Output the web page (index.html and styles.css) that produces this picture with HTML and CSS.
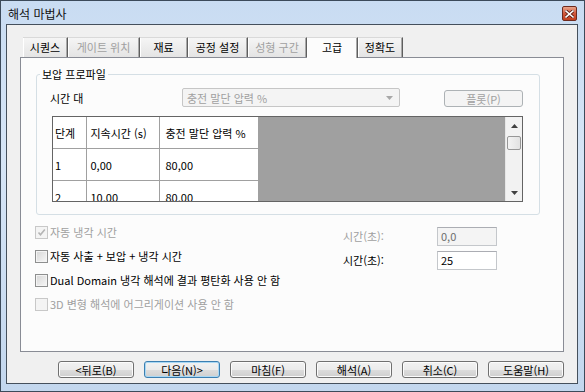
FILE: index.html
```html
<!DOCTYPE html>
<html lang="ko">
<head>
    <meta charset="UTF-8">
    <title>해석 마법사</title>
    <link rel="stylesheet" href="styles.css">
</head>
<body>
    <div class="window">
        <div class="titlebar">
            <span class="title">해석 마법사</span>
            <span class="close-btn">
                <svg width="9" height="8" viewBox="0 0 9 8">
                    <path d="M1 1 L8 7 M8 1 L1 7" stroke="#5a1a10" stroke-width="3.2" stroke-linecap="square"/>
                    <path d="M1 1 L8 7 M8 1 L1 7" stroke="#ffffff" stroke-width="1.6" stroke-linecap="square"/>
                </svg>
            </span>
        </div>

        <div class="client">
            <div class="tabs">
                <div class="tab w45">시퀀스</div>
                <div class="tab w72 off">게이트 위치</div>
                <div class="tab w48">재료</div>
                <div class="tab w60">공정 설정</div>
                <div class="tab w59 off">성형 구간</div>
                <div class="tab w51 active">고급</div>
                <div class="tab w45">정확도</div>
            </div>

            <div class="tab-panel">
                <fieldset class="group">
                    <legend>보압 프로파일</legend>
                    <div class="profile-row">
                        <span class="row-label">시간 대</span>
                        <div class="combo">
                            <span>충전 말단 압력 %</span>
                            <svg width="7" height="4" viewBox="0 0 7 4"><path d="M0 0 H7 L3.5 4 Z" fill="#a8a8a8"/></svg>
                        </div>
                        <span class="btn small off">플롯(P)</span>
                    </div>

                    <div class="grid">
                        <table class="data">
                            <colgroup>
                                <col class="c1"><col class="c2"><col class="c3">
                            </colgroup>
                            <tr class="head">
                                <td>단계</td><td>지속시간 (s)</td><td>충전 말단 압력 %</td>
                            </tr>
                            <tr>
                                <td>1</td><td>0,00</td><td>80,00</td>
                            </tr>
                            <tr>
                                <td>2</td><td>10,00</td><td>80,00</td>
                            </tr>
                        </table>
                        <div class="grid-empty"></div>
                        <div class="vscroll">
                            <svg width="7" height="4" viewBox="0 0 7 4"><path d="M3.5 0 L7 4 H0 Z" fill="#404040"/></svg>
                            <span class="thumb"></span>
                            <span class="track"></span>
                            <svg width="7" height="4" viewBox="0 0 7 4"><path d="M0 0 H7 L3.5 4 Z" fill="#404040"/></svg>
                        </div>
                    </div>
                </fieldset>

                <div class="options">
                    <div class="checks">
                        <label class="check off">
                            <span class="box">
                                <svg width="9" height="9" viewBox="0 0 9 9"><path d="M1.5 4.5 L3.5 6.8 L7.8 1.5" fill="none" stroke="#b4b4b4" stroke-width="1.6"/></svg>
                            </span>
                            자동 냉각 시간
                        </label>
                        <label class="check"><span class="box"></span>자동 사출 + 보압 + 냉각 시간</label>
                        <label class="check"><span class="box"></span>Dual Domain 냉각 해석에 결과 평탄화 사용 안 함</label>
                        <label class="check off"><span class="box"></span>3D 변형 해석에 어그리게이션 사용 안 함</label>
                    </div>
                    <div class="times">
                        <div class="time-row off">
                            <span class="time-label">시간(초):</span>
                            <span class="field">0,0</span>
                        </div>
                        <div class="time-row">
                            <span class="time-label">시간(초):</span>
                            <span class="field">25</span>
                        </div>
                    </div>
                </div>
            </div>

            <div class="buttons">
                <span class="btn">&lt;뒤로(B)</span>
                <span class="btn focus">다음(N)&gt;</span>
                <span class="btn">마침(F)</span>
                <span class="btn">해석(A)</span>
                <span class="btn">취소(C)</span>
                <span class="btn">도움말(H)</span>
            </div>
        </div>
    </div>
</body>
</html>
```

FILE: styles.css
```css
body {
    margin: 0;
    font-family: "Noto Sans CJK KR", sans-serif;
    font-size: 11px;
    color: #000;
    background: #fff;
}

.window {
    width: 585px;
    height: 392px;
    box-sizing: border-box;
    border: 1px solid #3c4a5a;
    padding: 0 6px 7px 5px;
    background: linear-gradient(#c9dcf2, #d6e5f6 40%, #c3d7ee);
}

.titlebar {
    height: 23px;
    display: flex;
    align-items: center;
    justify-content: space-between;
    padding: 2px 0 0 2px;
    box-sizing: border-box;
}

.title {
    font-size: 12px;
    color: #111;
}

.close-btn {
    width: 15px;
    height: 15px;
    box-sizing: border-box;
    margin-right: 1px;
    border: 1px solid #6e2a1e;
    border-radius: 2px;
    background: linear-gradient(#e9a58c, #d0583c 50%, #c1401f);
    display: flex;
    align-items: center;
    justify-content: center;
}

.client {
    height: 360px;
    box-sizing: border-box;
    border: 1px solid #45505c;
    background: #f0f0f0;
    padding: 12px 13px 0 13px;
}

/* tabs */
.tabs {
    display: flex;
    height: 20px;
    margin-left: 3px;
}

.tab {
    box-sizing: border-box;
    height: 20px;
    line-height: 19px;
    text-align: center;
    border-top: 1px solid #d9d9d9;
    border-right: 1px solid #5e5e5e;
    box-shadow: inset -1px 0 #a9a9a9, inset 1px 0 #fff;
    background: linear-gradient(#f5f5f5, #e4e4e4);
}

.tab.off { color: #a0a0a0; }

.tab.active {
    background: #fcfcfc;
    height: 21px;
    margin-bottom: -1px;
    position: relative;
}

.w45 { width: 45px; }
.w48 { width: 48px; }
.w51 { width: 51px; }
.w59 { width: 59px; }
.w60 { width: 60px; }
.w72 { width: 72px; }

.tab-panel {
    height: 295px;
    box-sizing: border-box;
    border: 1px solid #898c95;
    background: #fcfcfc;
}

/* group box */
.group {
    width: 504px;
    box-sizing: border-box;
    margin: 8px 0 0 15px;
    padding: 0 0 12px 0;
    border: 1px solid #d5dfe5;
    border-radius: 3px;
}

.group legend {
    padding: 0 2px;
    margin-left: 3px;
    line-height: 16px;
}

.profile-row {
    display: flex;
    align-items: center;
    margin-top: 6px;
    padding-left: 13px;
    height: 19px;
}

.row-label {
    width: 132px;
}

.combo {
    width: 218px;
    height: 19px;
    box-sizing: border-box;
    border: 1px solid #c6c6c6;
    border-radius: 2px;
    background: #f4f4f4;
    color: #a0a0a0;
    display: flex;
    align-items: center;
    justify-content: space-between;
    padding: 0 6px 0 4px;
}

.btn {
    width: 76px;
    height: 17px;
    box-sizing: border-box;
    border: 1px solid #707070;
    border-radius: 3px;
    background: linear-gradient(#f2f2f2, #ebebeb 50%, #dddddd 51%, #cfcfcf);
    display: flex;
    align-items: center;
    justify-content: center;
    box-shadow: inset 0 0 0 1px #fcfcfc;
}

.btn.small {
    width: 79px;
    margin-left: 44px;
    margin-top: 2px;
}

.btn.off {
    border-color: #adb2b5;
    background: #f4f4f4;
    color: #a0a0a0;
    box-shadow: none;
}

.btn.focus {
    border-color: #3c7fb1;
    box-shadow: inset 0 0 0 1px #a9d8f4;
}

/* grid */
.grid {
    display: flex;
    width: 471px;
    height: 86px;
    box-sizing: border-box;
    margin: 9px 0 0 15px;
    border: 1px solid #646464;
    overflow: hidden;
}

.data {
    border-collapse: collapse;
    table-layout: fixed;
    width: 205px;
    background: #fff;
    flex: none;
}

.c1 { width: 33px; }
.c2 { width: 73px; }
.c3 { width: 99px; }

.data td {
    height: 31px;
    padding: 0 0 0 4px;
    border-right: 1px solid #a0a0a0;
    border-bottom: 1px solid #a0a0a0;
    white-space: nowrap;
    overflow: hidden;
}

.data td:first-child { padding-left: 2px; }
.data td:nth-child(3) { padding-left: 6px; }

.grid-empty {
    flex: 1;
    background: #a0a0a0;
}

.vscroll {
    width: 17px;
    flex: none;
    background: #f2f2f2;
    border-left: 1px solid #e6e6e6;
    box-sizing: border-box;
    display: flex;
    flex-direction: column;
    align-items: center;
    padding: 7px 0 6px;
}

.thumb {
    width: 14px;
    height: 14px;
    box-sizing: border-box;
    margin-top: 8px;
    border: 1px solid #979797;
    border-radius: 2px;
    background: linear-gradient(90deg, #f3f3f3, #e2e2e2);
}

.track { flex: 1; }

/* options */
.options {
    display: flex;
    margin-top: 5px;
    padding-left: 14px;
}

.checks {
    width: 308px;
}

.check {
    display: flex;
    align-items: center;
    height: 24px;
}

.box {
    width: 13px;
    height: 13px;
    box-sizing: border-box;
    margin-right: 2px;
    border: 1px solid #8e8f8f;
    background: linear-gradient(135deg, #d6d6d6, #f7f7f7);
    box-shadow: inset 0 0 0 1px #f4f4f4;
    display: flex;
    align-items: center;
    justify-content: center;
}

.check.off {
    color: #a0a0a0;
}

.check.off .box {
    border-color: #c8c8c8;
    background: #f4f4f4;
}

.times {
    padding-top: 4px;
}

.time-row {
    display: flex;
    align-items: center;
    height: 24px;
}

.time-label {
    width: 94px;
}

.time-row.off .time-label { color: #a0a0a0; }

.field {
    width: 60px;
    height: 19px;
    box-sizing: border-box;
    border: 1px solid #c4c7cb;
    border-top-color: #abadb3;
    background: #fff;
    padding-left: 3px;
    line-height: 16px;
}

.time-row.off .field {
    background: #f4f4f4;
    color: #6d6d6d;
}

.buttons {
    display: flex;
    justify-content: flex-end;
    gap: 10px;
    margin-top: 9px;
}
```
